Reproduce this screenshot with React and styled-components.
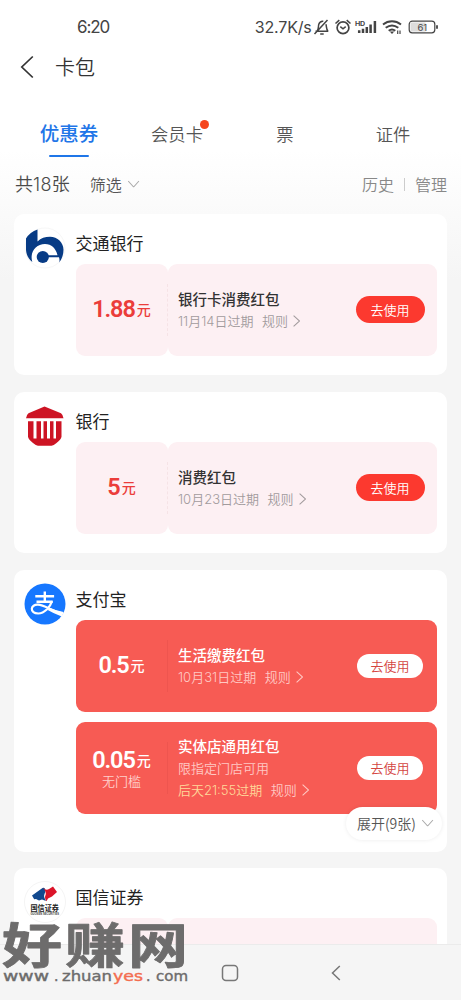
import React from 'react';
import styled, { createGlobalStyle, css } from 'styled-components';

const GlobalStyle = createGlobalStyle`
* {
    box-sizing: border-box;
}
body {
    margin: 0;
    background-color: #f5f5f5;
    font-family: 'Noto Sans CJK SC', sans-serif;
    overflow: hidden;
}
`;

const groups = [
    {
        name: '交通银行',
        logo: 'bocom',
        coupons: [{ amount: '1.88', title: '银行卡消费红包', expire: '11月14日过期' }],
    },
    {
        name: '银行',
        logo: 'bank',
        coupons: [{ amount: '5', title: '消费红包', expire: '10月23日过期' }],
    },
    {
        name: '支付宝',
        logo: 'alipay',
        solid: true,
        more: '展开(9张)',
        coupons: [
            { amount: '0.5', title: '生活缴费红包', expire: '10月31日过期' },
            { amount: '0.05', limit: '无门槛', title: '实体店通用红包', desc: '限指定门店可用', expire: '后天21:55过期', urgent: true },
        ],
    },
    {
        name: '国信证券',
        logo: 'guosen',
        coupons: [{ amount: '', title: '', expire: '' }],
    },
];

function StatusIcons() {
    return (
        <svg width="128" height="24" viewBox="0 0 128 24" fill="none" stroke="#444" strokeWidth="1.5">
            {/* muted bell */}
            <path d="M2.500 16.300h12.800M4 16C5.800 14.500 5.200 11 5.800 9.200c.7-2.200 2.400-3.200 4.500-3M12.900 9.300c.8 2.200.2 4.800 2 6.800M7.200 18.900h3.500M1.500 19 14.500 5" />
            {/* alarm clock */}
            <circle cx="30" cy="12.800" r="5.900" strokeWidth="1.700" />
            <path d="m27.300 11.600 2.700 2.200 2.700-2.200M22.500 8.500l3.800-3.400M37.500 8.500l-3.800-3.400" />
            {/* signal */}
            <path d="M46.200 18v-2.700M50 18v-4.200M53.800 18v-6M57.600 18V9.500M61.900 18V6" strokeWidth="2.500" />
            <text x="42" y="10.500" fill="#444" stroke="none" fontSize="6.500" fontWeight="700" fontFamily="Inter, sans-serif" textLength="10" lengthAdjust="spacingAndGlyphs">HD</text>
            {/* wifi */}
            <path d="M70 9.500c5.500-4.300 12.500-4.300 18 0M72.700 12.800c4-3 8.600-3 12.600 0M75.700 15.800c2.200-1.700 4.400-1.700 6.600 0" strokeWidth="2" />
            <path d="m79 19 2.300-2.500h-4.600z" fill="#444" stroke="none" />
            <path d="M84.700 19v-3.500M87 15.500V19" strokeWidth="1.200" />
            {/* battery */}
            <rect x="96.200" y="6.200" width="25.600" height="11.600" rx="3" strokeWidth="1.200" />
            <path d="M97.500 8.500q0-1 1-1h14v9h-14q-1 0-1-1z" fill="#dcdcdc" stroke="none" />
            <path d="M124 10.200v3.600" strokeWidth="1.800" />
            <text x="104.500" y="15.600" fill="#444" stroke="none" fontSize="9.500" fontFamily="Inter, sans-serif" textLength="9.500">61</text>
        </svg>
    );
}

function Logo({ type }) {
    if (type === 'bocom') {
        return (
            <svg width="42" height="42" viewBox="0 0 42 42">
                <circle cx="21" cy="21" r="20" fill="#fff" stroke="#f7f7f7" />
                <path d="M13.500 2.500V14.500C17 11 21 9.800 26 9.800c7.500 0 13.500 5.700 13.500 13 0 5-1.700 9.200-4.200 12.700.4-2 .200-3.800-.300-5.200H24v-2h9.500C32 21.500 27.500 17 21 17 11.500 17 5.500 25.500 8.300 35 4 31.500 2 27 2 22V11.500q4-6.500 11.500-9z" fill="#073b85" />
                <circle cx="18.800" cy="30" r="6.100" fill="#073b85" />
            </svg>
        );
    }
    if (type === 'bank') {
        return (
            <svg width="42" height="42" viewBox="0 0 42 42" fill="#cd1424">
                <path d="M20.500 1.500 37 8.200q2 1.500 2.500 5H2q.500-3.500 2.500-5z" />
                <path d="M4 16.300h5.500v17.200H12.500V16.300h4.500v17.200h2.500V16.300h3.500v17.200h3V16.300h3.500v17.200h2.500V16.300h5.500v15.500q-.5 3-5 6.200-3 2.700-5 2.700H14q-2 0-5-2.700-4.500-3.200-5-6.200z" />
            </svg>
        );
    }
    if (type === 'alipay') {
        return (
            <svg width="42" height="42" viewBox="0 0 42 42">
                <circle cx="21" cy="21" r="20.500" fill="#1677ff" />
                <g fill="none" stroke="#fff" strokeWidth="2.400">
                    <path d="M11.300 13.300h18.800M12.500 18.700h16.200M20.800 8.500v10" />
                    <path d="M28 18.200c-1.800 5.800-7.500 12.300-13.800 12.300-4.200 0-6.500-2-6.400-4.700.1-2.500 2.700-4.300 6.200-4.100 6.500.4 13.500 6 25 9" strokeWidth="2.200" />
                </g>
                <path d="M25.500 24.800q6.500 3 14 4.200l-1.800 4.500q-7.700-2.800-14-6.500z" fill="#fff" />
            </svg>
        );
    }
    return (
        <svg width="42" height="42" viewBox="0 0 42 42">
            <circle cx="21" cy="21" r="20.500" fill="#fff" stroke="#f4f4f4" />
            <path d="M8 14.500 18.500 7q1.500-.8 2.500.8.800 3.200-.500 5.200-1 2 0 4l1.500 3-4-1.500-3 1-3-1.500-1.800.3z" fill="#11498e" />
            <path d="M19 6.800q3 3 6 1.200l4-2.500L33 11l-5 4.500-4 2-1.500 2.800q-2.500-3.500-.8-6.500.7-3-2.700-7z" fill="#db1429" />
            <text x="6.500" y="30" fontSize="7.500" fontWeight="700" textLength="28.500" lengthAdjust="spacingAndGlyphs" fill="#222">国信证券</text>
            <text x="6.500" y="34.300" fontSize="2.800" fontWeight="700" textLength="28.500" lengthAdjust="spacingAndGlyphs" fill="#444" fontFamily="Liberation Sans, sans-serif">GUOSEN SECURITIES</text>
        </svg>
    );
}

const Chevron = ({ down, size = 9, color }) => (
    <ChevronIcon $down={down} width={size * 0.6} height={size} viewBox="0 0 6 10" fill="none" stroke={color || 'currentColor'} strokeWidth=".9">
        <path d="m.5.500 5 4.500-5 4.500" />
    </ChevronIcon>
);

function Coupon({ coupon, solid }) {
    return (
        <CouponBox $solid={solid}>
            <AmountSide $solid={solid}>
                {coupon.amount && (
                    <Amount>
                        <b>{coupon.amount}</b>
                        <span>元</span>
                    </Amount>
                )}
                {coupon.limit && <Limit>{coupon.limit}</Limit>}
            </AmountSide>
            <InfoSide $solid={solid}>
                {coupon.title && (
                    <>
                        <Info $solid={solid}>
                            <h4>{coupon.title}</h4>
                            {coupon.desc && <p>{coupon.desc}</p>}
                            <p>
                                <Expire $urgent={coupon.urgent}>{coupon.expire}</Expire>
                                <span>规则</span>
                                <Chevron size={12} />
                            </p>
                        </Info>
                        <UseButton $solid={solid}>去使用</UseButton>
                    </>
                )}
            </InfoSide>
        </CouponBox>
    );
}

function Watermark() {
    return (
        <WatermarkBox>
            <svg width="192" height="82" viewBox="0 -16 192 82" fill="#6d6c6c">
                <g transform="translate(2 41) scale(1 .8)">
                    <text x="0" y="0" fontSize="60" fontWeight="700" textLength="186" stroke="#6d6c6c" strokeWidth="1" strokeLinejoin="round" fontFamily="Noto Sans CJK SC, sans-serif">好赚网</text>
                </g>
                <g fontFamily="DejaVu Sans, sans-serif" fontSize="14" stroke="#6d6c6c" strokeWidth=".4">
                    <text x="3" y="58.700" textLength="46" lengthAdjust="spacingAndGlyphs">www</text>
                    <text x="54" y="58.700">.</text>
                    <text x="62" y="58.700" textLength="50" lengthAdjust="spacingAndGlyphs">zhuan</text>
                    <text x="113" y="58.700" textLength="30" lengthAdjust="spacingAndGlyphs" fill="#f36d50" stroke="#f36d50">yes</text>
                    <text x="146" y="58.700">.</text>
                    <text x="156" y="58.700" textLength="32" lengthAdjust="spacingAndGlyphs">com</text>
                </g>
            </svg>
        </WatermarkBox>
    );
}

export default function App() {
    return (
        <>
            <GlobalStyle />
            <Page>
                <StatusBar>
                    <time>6:20</time>
                    <div className="right">
                        <span>32.7K/s</span>
                        <StatusIcons />
                    </div>
                </StatusBar>
                <TitleBar>
                    <svg width="14" height="24" viewBox="0 0 14 24" fill="none" stroke="#333" strokeWidth="1.700">
                        <path d="M12.800 1.500 1.800 12l11 10.500" />
                    </svg>
                    <h1>卡包</h1>
                </TitleBar>
                <Tabs>
                    <Tab $active>优惠券</Tab>
                    <Tab $dot>会员卡</Tab>
                    <Tab>票</Tab>
                    <Tab>证件</Tab>
                </Tabs>
                <FilterRow>
                    <Total>共<i>18</i>张</Total>
                    <Filter>
                        筛选
                        <Chevron down size={12} color="#aaa" />
                    </Filter>
                    <Links>
                        <span>历史</span>
                        <span>管理</span>
                    </Links>
                </FilterRow>
                <List>
                    {groups.map((group) => (
                        <Card key={group.name}>
                            <Logo type={group.logo} />
                            <CardBody>
                                <h3>{group.name}</h3>
                                {group.coupons.map((coupon, i) => (
                                    <Coupon key={i} coupon={coupon} solid={group.solid} />
                                ))}
                            </CardBody>
                            {group.more && (
                                <MoreButton>
                                    {group.more}
                                    <Chevron down size={12} color="#aaa" />
                                </MoreButton>
                            )}
                        </Card>
                    ))}
                </List>
                <NavBar>
                    <span />
                    <svg width="18" height="18" viewBox="0 0 18 18" fill="none" stroke="#777" strokeWidth="1.500">
                        <rect x="1.500" y="1.500" width="15" height="15" rx="3.500" />
                    </svg>
                    <svg width="10" height="16" viewBox="0 0 10 16" fill="none" stroke="#777" strokeWidth="1.500">
                        <path d="M8.800 1 1.500 8l7.300 7" />
                    </svg>
                </NavBar>
                <Watermark />
            </Page>
        </>
    );
}

const Page = styled.div`
position: relative;
display: flex;
flex-direction: column;
width: 461px;
height: 1000px;
overflow: hidden;
color: #333;
background: linear-gradient(#fff 0, #fff 150px, #f5f5f5 280px);
`;

const StatusBar = styled.header`
display: flex;
justify-content: space-between;
align-items: center;
flex: none;
height: 42px;
padding: 12px 20px 0 77px;
font-family: Inter, sans-serif;
font-size: 17px;
line-height: 24px;
color: #444;
time{
    letter-spacing: -1.1px;
}
.right{
    display: flex;
    align-items: center;
    font-size: 16px;
    letter-spacing: -0.2px;
}
.right span{
    margin-right: 1.5px;
}
`;

const TitleBar = styled.div`
display: flex;
align-items: center;
flex: none;
height: 50px;
padding-left: 20px;
gap: 21px;
h1{
    margin: 0;
    font-size: 20px;
    font-weight: 350;
    line-height: 30px;
}
`;

const Tabs = styled.nav`
display: grid;
grid-template-columns: repeat(4, 108px);
flex: none;
height: 66px;
padding: 26px 0 0 15px;
`;

const Tab = styled.div`
position: relative;
text-align: center;
font-size: 17.3px;
font-weight: 350;
line-height: 32px;
height: 40px;
color: #555;
${({ $active }) => $active && css`
    font-size: 19.5px;
    font-weight: 500;
    line-height: 30px;
    color: #1f76e8;
    &::after{
        content: '';
        display: block;
        width: 40px;
        height: 2.5px;
        margin: 6.5px auto 0;
        border-radius: 2px;
        background-color: #1f76e8;
    }
`}
${({ $dot }) => $dot && css`
    &::after{
        content: '';
        position: absolute;
        top: 2px;
        left: 77px;
        width: 9px;
        height: 9px;
        border-radius: 50%;
        background-color: #f5451d;
    }
`}
`;

const FilterRow = styled.div`
display: flex;
align-items: center;
flex: none;
height: 55px;
padding: 0 14px 3px 15px;
font-weight: 350;
color: #555;
`;

const Total = styled.span`
font-size: 18px;
line-height: 26px;
color: #4a4a4a;
i{
    font-family: Inter, sans-serif;
    font-style: normal;
    letter-spacing: 0.3px;
}
`;

const Filter = styled.span`
display: flex;
align-items: center;
margin-left: 20px;
gap: 8px;
font-size: 16px;
line-height: 26px;
`;

const Links = styled.div`
display: flex;
align-items: center;
margin-left: auto;
font-size: 16px;
line-height: 26px;
color: #888;
span + span{
    display: flex;
    align-items: center;
}
span + span::before{
    content: '';
    width: 1px;
    height: 13px;
    margin: 0 10px;
    background-color: #ccc;
}
`;

const ChevronIcon = styled.svg`
flex: none;
transform: ${({ $down }) => ($down ? 'rotate(90deg)' : 'none')};
`;

const List = styled.main`
flex: 1;
display: flex;
flex-direction: column;
gap: 16.5px;
min-height: 0;
padding: 0.5px 14px 0;
overflow: hidden;
`;

const Card = styled.section`
position: relative;
display: flex;
flex: none;
padding: 13px 10px 19.5px 10px;
border-radius: 10px;
background-color: #fff;
&:nth-child(3){
    padding-bottom: 38px;
}
& > svg{
    flex: none;
}
`;

const CardBody = styled.div`
flex: 1;
display: flex;
flex-direction: column;
gap: 10px;
margin-left: 9.5px;
h3{
    margin: 0 0 -3px;
    height: 30px;
    font-size: 17px;
    line-height: 31px;
    font-weight: 400;
    color: #222;
}
`;

const CouponBox = styled.div`
display: flex;
height: 92px;
border-radius: 9px;
color: ${({ $solid }) => ($solid ? '#fff' : '#eb3d3a')};
background-color: ${({ $solid }) => ($solid ? '#f75b54' : 'transparent')};
`;

const AmountSide = styled.div`
display: flex;
flex-direction: column;
align-items: center;
justify-content: center;
width: 92px;
padding-bottom: 2px;
border-radius: 9px;
background-color: ${({ $solid }) => ($solid ? 'transparent' : '#fdf0f3')};
`;

const Amount = styled.div`
display: flex;
align-items: center;
height: 28px;
line-height: 28px;
b{
    font-family: Roboto, sans-serif;
    font-size: 23.5px;
    font-weight: 600;
    letter-spacing: -1.1px;
}
span{
    margin-left: 2px;
    font-size: 14px;
    font-weight: 500;
}
`;

const Limit = styled.div`
font-size: 13px;
line-height: 14px;
font-weight: 350;
color: #ffd0cb;
`;

const InfoSide = styled.div`
position: relative;
display: flex;
align-items: center;
justify-content: space-between;
flex: 1;
padding: 0 12.5px 0 10.5px;
border-radius: 9px;
background-color: ${({ $solid }) => ($solid ? 'transparent' : '#fdf0f3')};
&::before{
    content: '';
    position: absolute;
    left: -1px;
    top: 20px;
    bottom: 20px;
    border-left: 1px ${({ $solid }) => ($solid ? 'solid #ee554f' : 'dashed #f6e3e6')};
}
`;

const Info = styled.div`
h4{
    margin: 0;
    font-size: 14.5px;
    line-height: 23px;
    font-weight: 500;
    color: ${({ $solid }) => ($solid ? '#fff' : '#333')};
}
p{
    display: flex;
    align-items: center;
    margin: 0;
    font-size: 13px;
    line-height: 22px;
    font-weight: 350;
    color: ${({ $solid }) => ($solid ? '#ffc9c4' : '#a29b9d')};
}
svg{
    margin-left: 5px;
}
`;

const Expire = styled.span`
margin-right: 8.5px;
font-family: Inter, 'Noto Sans CJK SC', sans-serif;
${({ $urgent }) => $urgent && css`
    color: #ffd99a;
`}
`;

const UseButton = styled.button`
width: ${({ $solid }) => ($solid ? '66px' : '69px')};
height: ${({ $solid }) => ($solid ? '24px' : '27px')};
margin-right: ${({ $solid }) => ($solid ? '1.5px' : '0')};
padding: 0;
border: none;
border-radius: 14px;
font-family: inherit;
font-size: 13px;
font-weight: 350;
line-height: 24px;
color: ${({ $solid }) => ($solid ? '#d4453f' : '#fff')};
background-color: ${({ $solid }) => ($solid ? '#fff' : '#fc392f')};
`;

const MoreButton = styled.div`
position: absolute;
right: 5px;
bottom: 12px;
display: flex;
align-items: center;
justify-content: center;
gap: 8px;
width: 96px;
height: 33px;
border-radius: 17px;
font-size: 14px;
font-weight: 350;
color: #555;
background-color: #fff;
box-shadow: 0 0 4px rgba(0, 0, 0, 0.08);
`;

const NavBar = styled.footer`
display: grid;
grid-template-columns: 177px 106px 106px;
align-items: center;
justify-items: center;
flex: none;
height: 56px;
border-top: 1px solid #ebebeb;
background-color: #f5f5f5;
`;

const WatermarkBox = styled.div`
position: absolute;
left: 0;
bottom: 12px;
height: 82px;
`;
